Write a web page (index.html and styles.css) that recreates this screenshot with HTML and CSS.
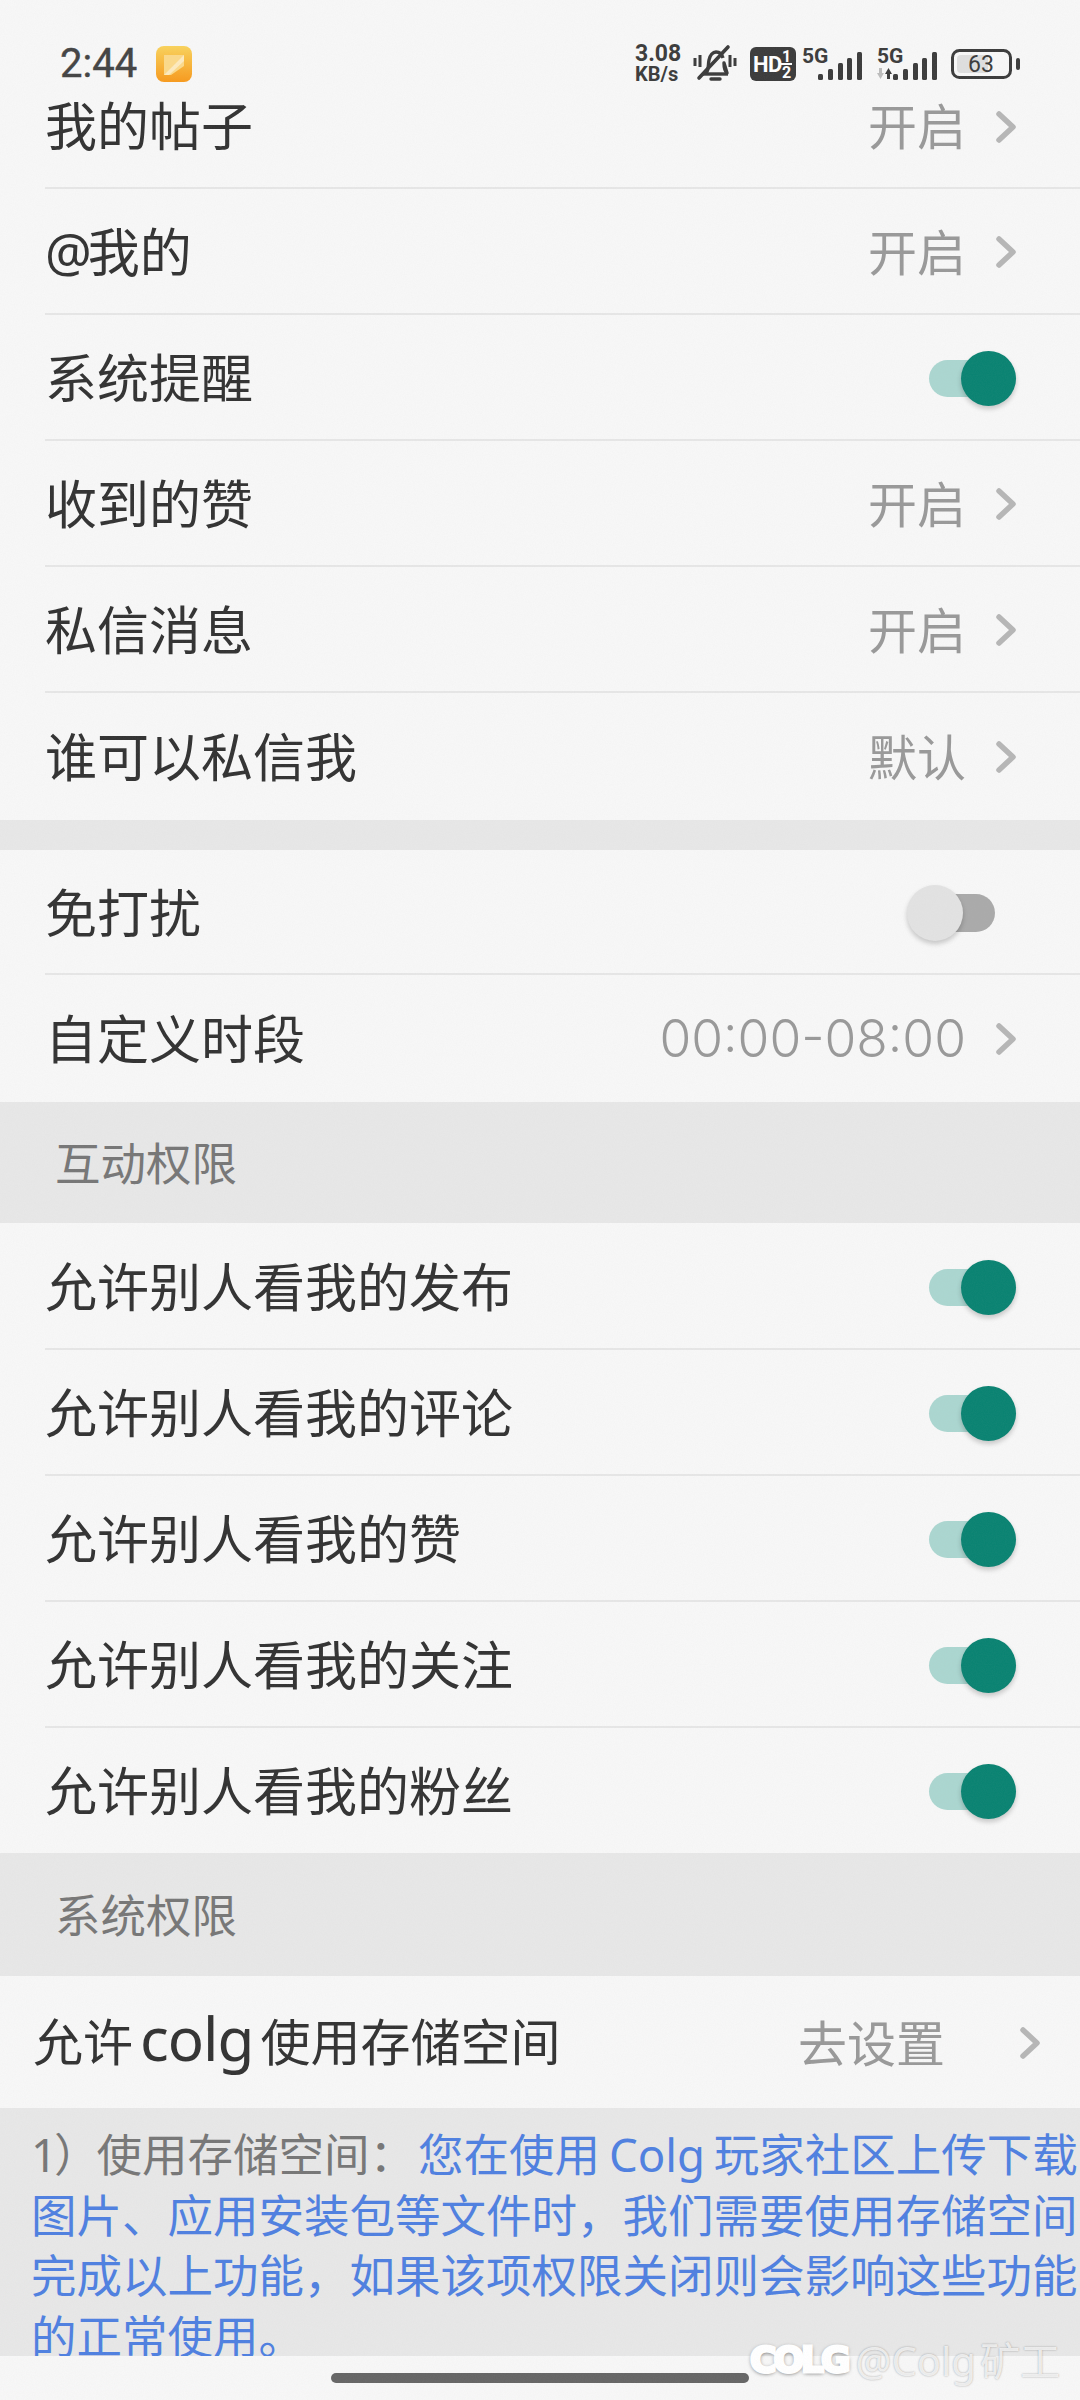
FILE: index.html
```html
<!DOCTYPE html>
<html lang="zh-CN">
<head>
    <meta charset="UTF-8">
    <meta name="viewport" content="width=device-width, initial-scale=1.0">
    <title>消息设置</title>
    <link rel="stylesheet" href="styles.css">
</head>
<body>

<svg class="sprites" width="0" height="0">
    <symbol id="chev" viewBox="0 0 20 32">
        <polyline points="3,3 17,16 3,29" fill="none" stroke="#b6b6b6" stroke-width="5.5" stroke-linecap="round" stroke-linejoin="round"/>
    </symbol>
    <filter id="grain">
        <feTurbulence type="fractalNoise" baseFrequency="0.9" numOctaves="2" seed="4"/>
        <feColorMatrix values="0 0 0 0 0.5  0 0 0 0 0.5  0 0 0 0 0.5  0 0 0 1.4 -0.35"/>
    </filter>
</svg>

<div class="page">

    <div class="status">
        <div class="status-left">
            <span class="time">2:44</span>
            <svg class="notif" width="36" height="36" viewBox="0 0 36 36">
                <defs>
                    <linearGradient id="notifBg" x1="0" y1="0" x2="0" y2="1">
                        <stop offset="0" stop-color="#f9d25c"/>
                        <stop offset="1" stop-color="#f79a1e"/>
                    </linearGradient>
                </defs>
                <rect width="36" height="36" rx="8" fill="url(#notifBg)"/>
                <path d="M8 9h20v11l-13 9H8z" fill="#fbd98a"/>
                <path d="M28 9v6L13 29H8z" fill="#fff" opacity=".45"/>
            </svg>
        </div>
        <div class="status-right">
            <div class="speed"><span>3.08</span><span>KB/s</span></div>
            <svg class="bell" width="44" height="38" viewBox="0 0 44 38" fill="none" stroke="#3c3c3c">
                <path d="M13 28c3-3 2-8 3-13 1-5 4-8 7-8s6 2 7 6m1 5c0 4 1 8 3 10z" stroke-width="3.4" stroke-linejoin="round"/>
                <path d="M9 29h26" stroke-width="3.4"/>
                <path d="M35 2 6 33" stroke-width="3.6" stroke-linecap="round"/>
                <path d="M18 34h9" stroke-width="3.4" stroke-linecap="round"/>
                <path d="M2 13v8M7 10v12M37 10v12M42 13v8" stroke-width="3"/>
            </svg>
            <svg class="hd" width="46" height="34" viewBox="0 0 46 34">
                <rect width="46" height="34" rx="6" fill="#3c3c3c"/>
                <text x="3" y="25" class="hd-text">HD</text>
                <text x="32" y="15" class="hd-frac">1</text>
                <rect x="31" y="16" width="11" height="2" fill="#fff"/>
                <text x="32" y="31" class="hd-frac">2</text>
            </svg>
            <svg class="signal" width="60" height="33" viewBox="0 0 60 33">
                <text x="0" y="15" class="sig-text">5G</text>
                <rect x="16" y="26" width="5" height="6" rx="1.5" fill="#3c3c3c"/>
                <rect x="26" y="21" width="5" height="11" rx="1.5" fill="#3c3c3c"/>
                <rect x="36" y="15" width="5" height="17" rx="1.5" fill="#3c3c3c"/>
                <rect x="45" y="10" width="5" height="22" rx="1.5" fill="#3c3c3c"/>
                <rect x="55" y="4" width="5" height="28" rx="1.5" fill="#3c3c3c"/>
            </svg>
            <svg class="signal" width="60" height="33" viewBox="0 0 60 33">
                <text x="0" y="15" class="sig-text">5G</text>
                <path d="M0 25h2v-5h3v5h2l-3.500 6z" fill="#bdbdbd"/>
                <path d="M8 26l3.500-6 3.500 6h-2v5h-3v-5z" fill="#3c3c3c"/>
                <rect x="16" y="26" width="5" height="6" rx="1.5" fill="#3c3c3c"/>
                <rect x="26" y="21" width="5" height="11" rx="1.5" fill="#3c3c3c"/>
                <rect x="36" y="15" width="5" height="17" rx="1.5" fill="#3c3c3c"/>
                <rect x="45" y="10" width="5" height="22" rx="1.5" fill="#3c3c3c"/>
                <rect x="55" y="4" width="5" height="28" rx="1.5" fill="#3c3c3c"/>
            </svg>
            <svg class="battery" width="69" height="30" viewBox="0 0 69 30">
                <rect x="1.500" y="1.500" width="58" height="27" rx="7" fill="none" stroke="#3c3c3c" stroke-width="3"/>
                <path d="M10 6h27v18H10a4 4 0 0 1-4-4V10a4 4 0 0 1 4-4z" fill="#dedede"/>
                <rect x="65" y="9" width="4" height="12" rx="2" fill="#3c3c3c"/>
                <text x="30" y="23" text-anchor="middle" class="bat-text">63</text>
            </svg>
        </div>
    </div>

    <div class="row row-first">
        <span class="label">我的帖子</span>
        <span class="value">开启</span>
        <svg class="chev"><use href="#chev"/></svg>
    </div>
    <div class="row">
        <span class="label"><span class="at">@</span>我的</span>
        <span class="value">开启</span>
        <svg class="chev"><use href="#chev"/></svg>
    </div>
    <div class="row">
        <span class="label">系统提醒</span>
        <span class="toggle on"><i></i></span>
    </div>
    <div class="row">
        <span class="label">收到的赞</span>
        <span class="value">开启</span>
        <svg class="chev"><use href="#chev"/></svg>
    </div>
    <div class="row">
        <span class="label">私信消息</span>
        <span class="value">开启</span>
        <svg class="chev"><use href="#chev"/></svg>
    </div>
    <div class="row row-last row-tall">
        <span class="label">谁可以私信我</span>
        <span class="value">默认</span>
        <svg class="chev"><use href="#chev"/></svg>
    </div>

    <div class="gap"></div>

    <div class="row row-short">
        <span class="label">免打扰</span>
        <span class="toggle off"><i></i></span>
    </div>
    <div class="row row-last row-tall">
        <span class="label">自定义时段</span>
        <span class="value time-range">00:00-08:00</span>
        <svg class="chev"><use href="#chev"/></svg>
    </div>

    <div class="section">互动权限</div>

    <div class="row">
        <span class="label">允许别人看我的发布</span>
        <span class="toggle on"><i></i></span>
    </div>
    <div class="row">
        <span class="label">允许别人看我的评论</span>
        <span class="toggle on"><i></i></span>
    </div>
    <div class="row">
        <span class="label">允许别人看我的赞</span>
        <span class="toggle on"><i></i></span>
    </div>
    <div class="row">
        <span class="label">允许别人看我的关注</span>
        <span class="toggle on"><i></i></span>
    </div>
    <div class="row row-last">
        <span class="label">允许别人看我的粉丝</span>
        <span class="toggle on"><i></i></span>
    </div>

    <div class="section section-2">系统权限</div>

    <div class="row row-last row-storage">
        <span class="label">允许 <span class="latin">colg</span> 使用存储空间</span>
        <span class="value">去设置</span>
        <svg class="chev"><use href="#chev"/></svg>
    </div>

    <div class="note">
        <span class="num">1）</span>使用存储空间：<span class="link"><span class="first">您在使用 Colg 玩家社区上传下载</span><br>
        图片、应用安装包等文件时，我们需要使用存储空间<br>
        完成以上功能，如果该项权限关闭则会影响这些功能<br>
        的正常使用。</span>
    </div>

    <div class="home-bar"><span></span></div>

    <div class="watermark">
        <span class="wm-logo">COLG</span>
        <span class="wm-name">@Colg 矿工</span>
    </div>

    <svg class="grain-layer" width="1080" height="2400"><rect width="1080" height="2400" filter="url(#grain)"/></svg>
</div>

</body>
</html>
```

FILE: styles.css
```css
* { box-sizing: border-box; }
html, body { margin: 0; padding: 0; }
body { width: 1080px; height: 2400px; overflow: hidden; background: #f7f7f7; font-family: "Noto Sans", "Noto Sans CJK SC", sans-serif; color: #333; }
.sprites { position: absolute; }
.page { position: relative; width: 1080px; height: 2400px; overflow: hidden; }
.grain-layer { position: absolute; left: 0; top: 0; opacity: .05; pointer-events: none; }

/* status bar */
.status { display: flex; justify-content: space-between; align-items: center; height: 90px; padding: 38px 60px 0 60px; }
.status-left { display: flex; align-items: center; gap: 19px; height: 36px; }
.time { font-family: Roboto, sans-serif; font-size: 40px; color: #444; line-height: 36px; -webkit-text-stroke: .4px #444; }
.status-right { display: flex; align-items: center; height: 38px; }
.status-right svg { overflow: visible; }
.speed { display: flex; flex-direction: column; gap: 2px; width: 58px; font-family: Roboto, sans-serif; font-weight: 700; color: #3c3c3c; line-height: 18px; }
.speed span:first-child { font-size: 23px; }
.speed span:last-child { font-size: 20px; }
.hd { margin-left: 13px; }
.hd-text { font: 700 22px Roboto, sans-serif; fill: #fff; letter-spacing: -.5px; }
.hd-frac { font: 700 16px Roboto, sans-serif; fill: #fff; }
.signal { margin-left: 6px; }
.signal + .signal { margin-left: 15px; }
.sig-text { font: 700 21px Roboto, sans-serif; fill: #3c3c3c; }
.battery { margin-left: 14px; }
.bat-text { font: 400 23px Roboto, sans-serif; fill: #3c3c3c; }

/* rows */
.row { position: relative; display: flex; align-items: center; height: 126px; padding: 0 64px 0 45px; }
.row::after { content: ""; position: absolute; left: 45px; right: 0; bottom: -1px; height: 2px; background: #e6e6e6; }
.row-first { height: 98px; padding-bottom: 27px; }
.row-last::after { display: none; }
.row-tall { height: 128px; }
.row-short { height: 124px; }
.label { flex: 1; padding-bottom: 4px; font-size: 52px; color: #333; white-space: nowrap; }
.at { letter-spacing: -4px; }
.value { padding-bottom: 4px; font-size: 49px; color: #999; margin-right: 30px; white-space: nowrap; }
.time-range { font-family: Inter, sans-serif; font-weight: 300; font-size: 51.5px; padding-bottom: 0; }
.chev { width: 20px; height: 32px; flex: none; margin-top: 2px; }

/* switches */
.toggle { position: relative; display: block; width: 87px; height: 37px; margin-top: 2px; border-radius: 19px; background: #abd6d0; }
.toggle i { position: absolute; top: -9px; right: 0; width: 55px; height: 55px; border-radius: 50%; background: #0a8372; box-shadow: 0 3px 5px rgba(0,0,0,.2); }
.toggle.off { width: 72px; height: 38px; margin-right: 21px; background: #aaa; }
.toggle.off i { left: -16px; right: auto; top: -9px; width: 56px; height: 56px; background: #e2e2e2; }

/* grey bands */
.gap { height: 30px; background: #e7e7e7; }
.section { display: flex; align-items: center; height: 121px; padding: 0 0 3px 55px; background: #e7e7e7; font-size: 45.5px; color: #777; }
.section-2 { height: 123px; }

.row-storage { height: 132px; padding: 0 40px 0 33px; }
.row-storage .label { font-size: 50px; word-spacing: -6px; padding-bottom: 6px; }
.row-storage .value { margin-right: 75px; }
.latin { font-size: 60px; line-height: 1; letter-spacing: -1px; }

.note { height: 248px; overflow: hidden; padding: 16px 0 0 31px; background: #e7e7e7; font-size: 45.5px; line-height: 60.7px; color: #777; white-space: nowrap; word-spacing: -3px; }
.num { letter-spacing: -3px; }
.link { color: #4f80e0; }
.first { margin-left: 3px; }

.home-bar { display: flex; justify-content: center; padding-top: 17px; }
.home-bar span { width: 418px; height: 10px; border-radius: 5px; background: #666; }

/* watermark over the corner */
.watermark { position: absolute; left: 750px; top: 2330px; display: flex; align-items: center; }
.wm-logo { font: 700 36px "DejaVu Sans", sans-serif; letter-spacing: -3px; color: #fff; -webkit-text-stroke: 3px #fff; text-shadow: 0 1px 4px #444; }
.wm-name { margin-left: 8px; font-size: 40px; word-spacing: -6px; color: rgba(255,255,255,.8); text-shadow: 0 0 2px rgba(0,0,0,.35); }
```
